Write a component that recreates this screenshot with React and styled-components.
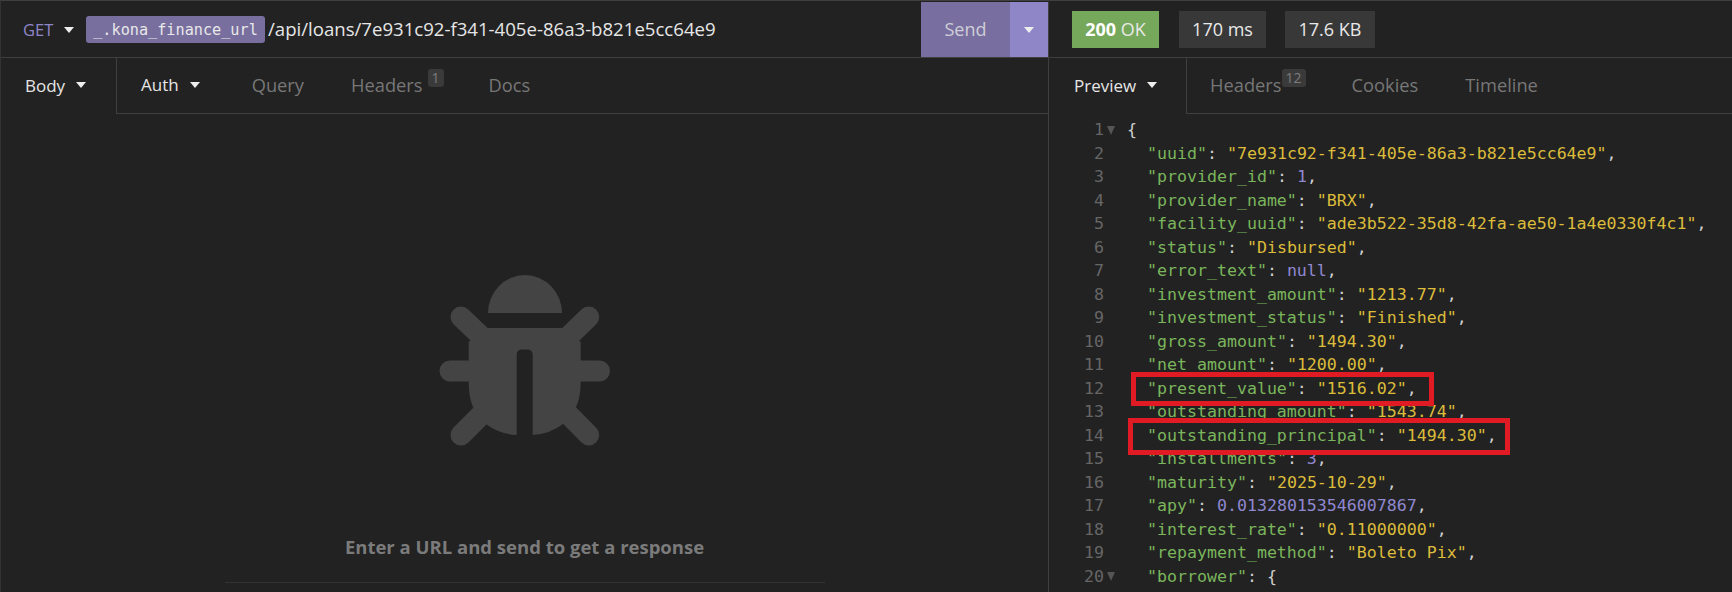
import React from "react";
import styled, { createGlobalStyle } from "styled-components";

const Global = createGlobalStyle`
  html, body { margin: 0; height: 100%; background: #222; overflow: hidden; }
  #root { height: 100%; }
`;
const UI = `"Open Sans", "Noto Sans", sans-serif`;
const MONO = `"DejaVu Sans Mono", "Liberation Mono", monospace`;
const LINE = "#3f3f3f";

const Shell = styled.div`
  height: 592px; box-sizing: border-box; padding-top: 1px; border-top: 1px solid ${LINE}; border-left: 1px solid #333;
  display: grid; grid-template-columns: 1048px 1fr; grid-template-rows: 1fr;
  background: #222; font-family: ${UI}; overflow: hidden;
`;
const Pane = styled.section`
  display: flex; flex-direction: column; min-width: 0; min-height: 0;
  border-right: ${p => (p.$divider ? `1px solid ${LINE}` : "none")};
`;
const Header = styled.header`
  height: 55px; flex: none; display: flex; align-items: center; border-bottom: 1px solid ${LINE};
`;
const Method = styled.span`
  margin-left: 22px; color: #8f86c9; font-size: 16.5px; width: 32px;
`;
const Caret = styled.i`
  display: inline-block; width: 0; height: 0; flex: none;
  border-left: 5.5px solid transparent; border-right: 5.5px solid transparent;
  border-top: 6.5px solid ${p => p.$color || "#eee"};
  margin-left: ${p => p.$gap || 0}px;
`;
const Chip = styled.span`
  margin-left: 12px; height: 27px; width: 179px; flex: none; box-sizing: border-box; border-radius: 3px; background: #786f9f; color: #e8e8e8;
  font: 15.2px ${MONO}; display: flex; align-items: center; justify-content: center;
`;
const Url = styled.span`
  margin-left: 3px; flex: 1; color: #e6e6e6; font-size: 18.6px; white-space: nowrap; padding-bottom: 2px;
`;
const Send = styled.button`
  height: 100%; width: 89px; border: 0; padding: 0 0 2px; background: #786e9f; color: #cfcfd8; font: 18px ${UI};
`;
const SendMore = styled.button`
  height: 100%; width: 38px; border: 0; padding: 0; background: #8f86c7; display: flex; align-items: center; justify-content: center;
`;
const Tag = styled.span`
  height: 37px; box-sizing: border-box; padding-bottom: 2px; display: flex; align-items: center; justify-content: center; width: ${p => p.$w}px; margin-left: ${p => p.$gap}px;
  background: ${p => p.$bg || "#383838"}; color: #e8e8e8; font-size: 18px;
  b { font-weight: 700; color: #fff; }
`;
const Tabs = styled.nav`
  height: 56px; flex: none; display: flex;
`;
const ActiveTab = styled.div`
  width: ${p => p.$w}px; flex: none; box-sizing: border-box; display: flex; align-items: center; padding: 0 0 2px ${p => p.$pad}px;
  border-right: 1px solid ${LINE}; color: #e6e6e6; font-size: 17px;
`;
const TabRest = styled.div`
  flex: 1; display: flex; align-items: center; border-bottom: 1px solid ${LINE}; min-width: 0; padding-bottom: 2px;
`;
const Tab = styled.span`
  display: flex; align-items: center; margin-left: ${p => p.$gap}px;
  color: ${p => (p.$on ? "#e6e6e6" : "#777")}; font-size: ${p => (p.$on ? 17 : 18.3)}px;
`;
const Badge = styled.sup`
  align-self: flex-start; margin: -3px 0 0 ${p => p.$gap}px; height: 18px; padding: 0 4px; border-radius: 3px; background: #3a3a3a; color: #7c7c7c;
  font-size: 14px; line-height: 18px;
`;
const Empty = styled.div`
  flex: 1; display: flex; flex-direction: column; align-items: center; min-height: 0; padding-top: 146px;
`;
const BugIcon = styled.svg`
  width: 210px; height: 200px; flex: none; color: #444;
`;
const EmptyText = styled.p`
  margin: 75px 0 0; color: #7b7b7b; font-size: 18.5px; font-weight: 700; line-height: 24px;
`;
const Rule = styled.hr`
  width: 600px; margin: 23px 0 0; border: 0; border-top: 1px solid #333; flex: none;
`;
const Code = styled.div`
  position: relative; flex: 1; overflow: hidden; padding-top: 4.4px; font: 16.6px/23.5px ${MONO};
`;
const Row = styled.div`
  display: flex; height: 23.5px; white-space: pre;
`;
const Num = styled.span`
  width: 55px; flex: none; text-align: right; color: #666;
`;
const Fold = styled.span`
  width: 23px; flex: none; display: flex; align-items: center; padding-left: 3px; box-sizing: border-box;
`;
const Tri = styled.i`
  width: 0; height: 0; border-left: 4.5px solid transparent; border-right: 4.5px solid transparent; border-top: 9px solid #555;
`;
const K = styled.span` color: #7ab55c; `;
const S = styled.span` color: #dcbc3a; `;
const N = styled.span` color: #9088d0; `;
const P = styled.span` color: #cfcfcf; `;
const Mark = styled.div`
  position: absolute; box-sizing: border-box; border: 5px solid #e01b24;
  left: ${p => p.$l}px; top: ${p => p.$t}px; width: ${p => p.$w}px; height: ${p => p.$h}px;
`;

const rows = [
  ["uuid", "s", "7e931c92-f341-405e-86a3-b821e5cc64e9"],
  ["provider_id", "n", "1"],
  ["provider_name", "s", "BRX"],
  ["facility_uuid", "s", "ade3b522-35d8-42fa-ae50-1a4e0330f4c1"],
  ["status", "s", "Disbursed"],
  ["error_text", "n", "null"],
  ["investment_amount", "s", "1213.77"],
  ["investment_status", "s", "Finished"],
  ["gross_amount", "s", "1494.30"],
  ["net_amount", "s", "1200.00"],
  ["present_value", "s", "1516.02"],
  ["outstanding_amount", "s", "1543.74"],
  ["outstanding_principal", "s", "1494.30"],
  ["installments", "n", "3"],
  ["maturity", "s", "2025-10-29"],
  ["apy", "n", "0.013280153546007867"],
  ["interest_rate", "s", "0.11000000"],
  ["repayment_method", "s", "Boleto Pix"],
];

function Bug() {
  return (
    <BugIcon viewBox="0 0 210 200" aria-hidden="true">
      <g fill="currentColor">
        <path d="M68 53 A37 38 0 0 1 142 53 Z" />
        <path d="M66 68 H143 L160.700 82 V122 Q160.700 137 156 147 L143 164 Q130 174 112.700 175 V95 Q112.700 89.500 107 89.500 H102 Q96.700 89.500 96.700 95 V175 Q79 174 66 164 L53 147 Q48.700 137 48.700 122 V82 Z" />
      </g>
      <g stroke="currentColor" strokeWidth="21" strokeLinecap="round">
        <path d="M41 57 L63 78 M30 111 H52 M41 175 L63 153 M168.700 57 L147 78 M179.500 111 H158 M168.700 175 L147 153" />
      </g>
    </BugIcon>
  );
}

export default function App() {
  return (
    <Shell>
      <Global />
      <Pane $divider>
        <Header>
          <Method>GET</Method>
          <Caret $gap={9} />
          <Chip>_.kona_finance_url</Chip>
          <Url>/api/loans/7e931c92-f341-405e-86a3-b821e5cc64e9</Url>
          <Send>Send</Send>
          <SendMore><Caret /></SendMore>
        </Header>
        <Tabs>
          <ActiveTab $w={116} $pad={24}>Body<Caret $gap={11} /></ActiveTab>
          <TabRest>
            <Tab $on $gap={24}>Auth<Caret $gap={11} /></Tab>
            <Tab $gap={52}>Query</Tab>
            <Tab $gap={47}>Headers<Badge $gap={5}>1</Badge></Tab>
            <Tab $gap={45}>Docs</Tab>
          </TabRest>
        </Tabs>
        <Empty>
          <Bug />
          <EmptyText>Enter a URL and send to get a response</EmptyText>
          <Rule />
        </Empty>
      </Pane>
      <Pane>
        <Header>
          <Tag $bg="#75a85b" $w={87} $gap={23}><span><b>200</b> OK</span></Tag>
          <Tag $w={87} $gap={20}>170 ms</Tag>
          <Tag $w={90} $gap={19}>17.6 KB</Tag>
        </Header>
        <Tabs>
          <ActiveTab $w={138} $pad={25}>Preview<Caret $gap={11} /></ActiveTab>
          <TabRest>
            <Tab $gap={23}>Headers<Badge $gap={0}>12</Badge></Tab>
            <Tab $gap={46}>Cookies</Tab>
            <Tab $gap={47}>Timeline</Tab>
          </TabRest>
        </Tabs>
        <Code>
          <Row><Num>1</Num><Fold><Tri /></Fold><P>{"{"}</P></Row>
          {rows.map(([key, type, value], i) => (
            <Row key={key}>
              <Num>{i + 2}</Num><Fold />
              <span>
                {"  "}<K>"{key}"</K><P>: </P>
                {type === "s" ? <S>"{value}"</S> : <N>{value}</N>}<P>,</P>
              </span>
            </Row>
          ))}
          <Row><Num>20</Num><Fold><Tri /></Fold><span>{"  "}<K>"borrower"</K><P>: {"{"}</P></span></Row>
          <Mark $l={82} $t={258} $w={303} $h={34} />
          <Mark $l={79} $t={304} $w={382} $h={37} />
        </Code>
      </Pane>
    </Shell>
  );
}
